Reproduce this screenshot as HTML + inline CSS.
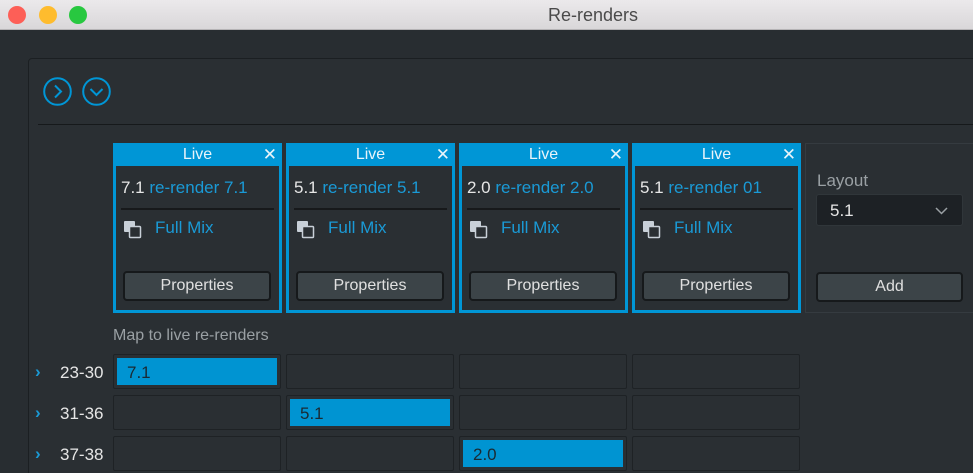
<!DOCTYPE html>
<html><head><meta charset="utf-8"><style>
*{margin:0;padding:0;box-sizing:border-box}
html,body{width:973px;height:473px;overflow:hidden}
body{background:#282d31;font-family:"Liberation Sans",sans-serif;position:relative}
.tb{position:absolute;left:0;top:0;width:973px;height:30px;background:linear-gradient(#ebe9eb,#d9d7d9);border-bottom:1px solid #b5b3b5}
.tb .t{position:absolute;left:548px;top:5px;font-size:18px;color:#4a4a4a}
.dot{position:absolute;top:6px;width:18px;height:18px;border-radius:50%}
.panel{position:absolute;left:28px;top:58px;width:960px;height:420px;background:#2a2f33;border:1px solid #1b1f22;border-radius:4px}
.ic{position:absolute;top:77px;width:29px;height:29px}
.div{position:absolute;left:38px;top:124px;width:935px;height:1px;background:#16191b}
.card{position:absolute;top:143px;width:169px;height:170px;border:3px solid #0096d6;border-top:none;background:#2a2f33}
.hd{height:23px;background:#0096d6;color:#e8f4fa;font-size:16px;text-align:center;line-height:24px;margin:0 -3px;position:relative}
.hd .x{position:absolute;right:5px;top:0;font-size:17px}
.l1{position:absolute;left:5px;top:35px;font-size:17px;color:#e6e6e6;white-space:nowrap}
.l1 span{color:#1a9ad6}
.hr{position:absolute;left:5px;right:5px;top:65px;height:2px;background:#17191b}
.fm{position:absolute;left:39px;top:75px;font-size:17px;color:#1a9ad6}
.sq{position:absolute;left:8px;top:78px}
.btn{position:absolute;left:7px;top:128px;width:148px;height:30px;border:2px solid #16191b;border-radius:4px;background:#3c4448;color:#e0e0e0;font-size:16px;text-align:center;line-height:26px}
.add{position:absolute;left:805px;top:143px;width:170px;height:170px;border:1px solid #353b40;background:#2a2f33}
.lbl{position:absolute;left:113px;top:327px;font-size:16px;color:#9aa0a4}
.cell{position:absolute;width:168px;height:35px;background:#2a2f33;border:1px solid #1e2225;border-radius:2px}
.fill{position:absolute;left:3px;top:3px;right:3px;bottom:3px;background:#0094d2;color:#1a2a33;font-size:17px;padding-left:10px;line-height:29px}
.rl{position:absolute;left:60px;font-size:17px;color:#e6e6e6}
.ch{position:absolute;left:35px;color:#1a9ad6;font-size:17px;font-weight:bold}
</style></head><body>
<div class="tb"><div class="dot" style="left:8px;background:#fd5f57"></div><div class="dot" style="left:39px;background:#febc2e"></div><div class="dot" style="left:69px;background:#28c840"></div><div class="t">Re-renders</div></div>
<div class="panel"></div>
<svg class="ic" style="left:43px" viewBox="0 0 29 29"><circle cx="14.5" cy="14.5" r="13.3" fill="none" stroke="#0096d6" stroke-width="2"/><path d="M12 8.5l6 6-6 6" fill="none" stroke="#0096d6" stroke-width="2"/></svg>
<svg class="ic" style="left:82px" viewBox="0 0 29 29"><circle cx="14.5" cy="14.5" r="13.3" fill="none" stroke="#0096d6" stroke-width="2"/><path d="M8.5 12l6 6 6-6" fill="none" stroke="#0096d6" stroke-width="2"/></svg>
<div class="div"></div>

<div class="card" style="left:113px"><div class="hd">Live<span class="x">✕</span></div><div class="l1">7.1 <span>re-render 7.1</span></div><div class="hr"></div><svg class="sq" width="18" height="18"><rect x="0" y="0" width="11" height="11" rx="1" fill="#c8d0d8"/><rect x="5.5" y="5.5" width="11" height="11" rx="1" fill="#2a2f33" stroke="#c8d0d8" stroke-width="1.5"/></svg><div class="fm">Full Mix</div><div class="btn">Properties</div></div>
<div class="card" style="left:286px"><div class="hd">Live<span class="x">✕</span></div><div class="l1">5.1 <span>re-render 5.1</span></div><div class="hr"></div><svg class="sq" width="18" height="18"><rect x="0" y="0" width="11" height="11" rx="1" fill="#c8d0d8"/><rect x="5.5" y="5.5" width="11" height="11" rx="1" fill="#2a2f33" stroke="#c8d0d8" stroke-width="1.5"/></svg><div class="fm">Full Mix</div><div class="btn">Properties</div></div>
<div class="card" style="left:459px"><div class="hd">Live<span class="x">✕</span></div><div class="l1">2.0 <span>re-render 2.0</span></div><div class="hr"></div><svg class="sq" width="18" height="18"><rect x="0" y="0" width="11" height="11" rx="1" fill="#c8d0d8"/><rect x="5.5" y="5.5" width="11" height="11" rx="1" fill="#2a2f33" stroke="#c8d0d8" stroke-width="1.5"/></svg><div class="fm">Full Mix</div><div class="btn">Properties</div></div>
<div class="card" style="left:632px"><div class="hd">Live<span class="x">✕</span></div><div class="l1">5.1 <span>re-render 01</span></div><div class="hr"></div><svg class="sq" width="18" height="18"><rect x="0" y="0" width="11" height="11" rx="1" fill="#c8d0d8"/><rect x="5.5" y="5.5" width="11" height="11" rx="1" fill="#2a2f33" stroke="#c8d0d8" stroke-width="1.5"/></svg><div class="fm">Full Mix</div><div class="btn">Properties</div></div>

<div class="add">
<div style="position:absolute;left:11px;top:27px;font-size:17px;color:#9aa0a4">Layout</div>
<div style="position:absolute;left:10px;top:50px;width:147px;height:32px;background:#1d2125;border:1px solid #30363a;border-radius:3px;color:#e6e6e6;font-size:17px;line-height:32px;padding-left:13px">5.1<svg style="position:absolute;right:14px;top:12px" width="13" height="8"><path d="M1 1l5.5 5.5L12 1" fill="none" stroke="#9aa0a4" stroke-width="1.5"/></svg></div>
<div class="btn" style="left:10px;width:147px">Add</div>
</div>

<div class="lbl">Map to live re-renders</div>

<div class="ch" style="top:362px">›</div><div class="rl" style="top:363px">23-30</div>
<div class="ch" style="top:403px">›</div><div class="rl" style="top:404px">31-36</div>
<div class="ch" style="top:444px">›</div><div class="rl" style="top:445px">37-38</div>

<div class="cell" style="left:113px;top:354px"><div class="fill">7.1</div></div>
<div class="cell" style="left:286px;top:354px"></div>
<div class="cell" style="left:459px;top:354px"></div>
<div class="cell" style="left:632px;top:354px"></div>
<div class="cell" style="left:113px;top:395px"></div>
<div class="cell" style="left:286px;top:395px"><div class="fill">5.1</div></div>
<div class="cell" style="left:459px;top:395px"></div>
<div class="cell" style="left:632px;top:395px"></div>
<div class="cell" style="left:113px;top:436px"></div>
<div class="cell" style="left:286px;top:436px"></div>
<div class="cell" style="left:459px;top:436px"><div class="fill">2.0</div></div>
<div class="cell" style="left:632px;top:436px"></div>
</body></html>
